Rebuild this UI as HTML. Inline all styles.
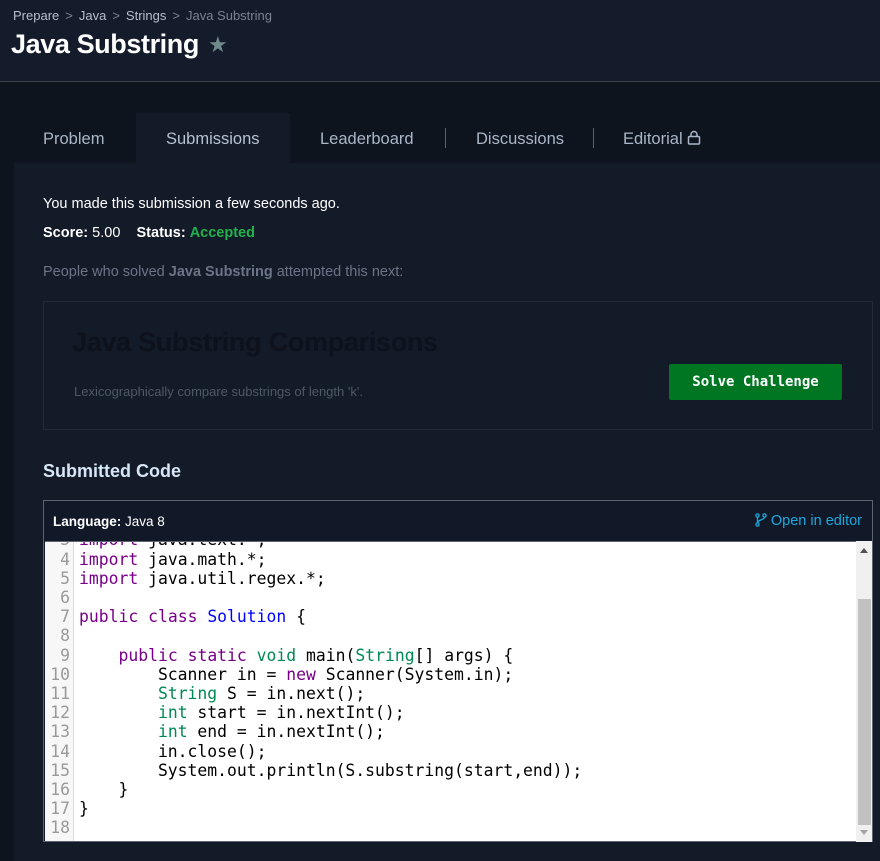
<!DOCTYPE html>
<html><head><meta charset="utf-8"><style>
*{margin:0;padding:0;box-sizing:border-box}
body{width:880px;height:861px;overflow:hidden;background:#0e141e;font-family:"Liberation Sans",sans-serif;position:relative;color:#fff}
.hdr{position:absolute;left:0;top:0;width:880px;height:82px;background:#141b2b;border-bottom:1px solid #3a3f4a}
.crumb{position:absolute;left:13px;top:8px;font-size:13px;color:#b7bfcc}
.crumb span.s{color:#7a8290;margin:0 6px}
.crumb .last{color:#7a8290}
h1{position:absolute;left:11px;top:29px;font-size:27px;font-weight:bold;color:#fff;letter-spacing:-0.4px}
.star{position:absolute;left:208px;top:32px;color:#6e8a8d;font-size:22px}
.tab{position:absolute;top:130px;font-size:16.5px;color:#a9b6c8}
.act{position:absolute;left:136px;top:113px;width:154px;height:51px;background:#131a28}
.sep{position:absolute;top:128px;width:1px;height:20px;background:#5a6270}
.panel{position:absolute;left:14px;top:163px;width:866px;height:698px;background:#131a28}
.t{position:absolute;font-size:14.5px}
.card{position:absolute;left:43px;top:301px;width:830px;height:129px;border:1px solid #232a38}
.btn{position:absolute;left:669px;top:364px;width:173px;height:36px;background:#007623;border-radius:2px;color:#fff;font-family:"DejaVu Sans Mono",monospace;font-weight:bold;font-size:14px;text-align:center;line-height:37px}
.code{position:absolute;left:43px;top:500px;width:830px;height:342px;border:1px solid #5e6470;background:#111827}
.cb{position:absolute;left:1px;top:40px;width:811px;height:300px;background:#fff;overflow:hidden;border-top:1px solid #5e6470}
.gut{position:absolute;left:0;top:0;width:29px;height:300px;background:#f7f7f7;border-right:1px solid #ddd}
pre{position:absolute;left:0;top:-50px;font-family:"DejaVu Sans Mono",monospace;font-size:16.4px;line-height:19.2px;color:#000}
.n{display:inline-block;width:25px;text-align:right;color:#999;margin-right:9px}
.k{color:#708}.v{color:#085}.d{color:#00f}
.sb{position:absolute;left:812px;top:40px;width:16px;height:301px;background:#f0f0f0}
</style></head><body>
<div class="hdr">
<div class="crumb">Prepare<span class="s">&gt;</span>Java<span class="s">&gt;</span>Strings<span class="s">&gt;</span><span class="last">Java Substring</span></div>
<h1>Java Substring</h1><div class="star">★</div>
</div>
<div class="act"></div>
<div class="panel"></div>
<div class="tab" style="left:43px">Problem</div>
<div class="tab" style="left:166px;color:#b6c2d2">Submissions</div>
<div class="tab" style="left:320px">Leaderboard</div>
<div class="sep" style="left:445px"></div>
<div class="tab" style="left:476px">Discussions</div>
<div class="sep" style="left:593px"></div>
<div class="tab" style="left:623px">Editorial <svg width="14" height="15" viewBox="0 0 14 15" style="vertical-align:-1px"><rect x="1.5" y="6.5" width="11" height="7.5" rx="1" fill="none" stroke="#a9b6c8" stroke-width="1.5"/><path d="M4 6.5V4.5a3 3 0 0 1 6 0v2" fill="none" stroke="#a9b6c8" stroke-width="1.5"/></svg></div>

<div class="t" style="left:43px;top:196px">You made this submission a few seconds ago.</div>
<div class="t" style="left:43px;top:225px"><b>Score:</b> 5.00 &nbsp;&nbsp; <b>Status:</b> <b style="color:#22b24c">Accepted</b></div>
<div class="t" style="left:43px;top:264px;color:#6b7585">People who solved <b>Java Substring</b> attempted this next:</div>
<div class="card"></div>
<div style="position:absolute;left:72px;top:327px;font-size:27px;font-weight:bold;color:#0d121c;letter-spacing:-0.3px">Java Substring Comparisons</div>
<div class="t" style="left:74px;top:384px;font-size:13px;color:#4e5968">Lexicographically compare substrings of length 'k'.</div>
<div class="btn">Solve Challenge</div>
<div style="position:absolute;left:43px;top:461px;font-size:18px;font-weight:bold;color:#d7e6f5">Submitted Code</div>
<div class="code">
<div style="position:absolute;left:9px;top:13px;font-size:13.5px"><b>Language:</b> Java 8</div>
<div style="position:absolute;right:10px;top:12px;font-size:14.5px;color:#1ba9e0"><svg width="12" height="14" viewBox="0 0 12 14" style="vertical-align:-2px"><g fill="none" stroke="#1ba9e0" stroke-width="1.3"><circle cx="2.5" cy="2.5" r="1.6"/><circle cx="2.5" cy="11.5" r="1.6"/><circle cx="9.5" cy="2.5" r="1.6"/><path d="M2.5 4.1v5.8M9.5 4.1c0 3-7 2.5-7 5.8"/></g></svg> Open in editor</div>
<div class="cb"><div class="gut"></div>
<pre><span class="n">1</span><span class="k">import</span> java.io.*;
<span class="n">2</span><span class="k">import</span> java.util.*;
<span class="n">3</span><span class="k">import</span> java.text.*;
<span class="n">4</span><span class="k">import</span> java.math.*;
<span class="n">5</span><span class="k">import</span> java.util.regex.*;
<span class="n">6</span>
<span class="n">7</span><span class="k">public</span> <span class="k">class</span> <span class="d">Solution</span> {
<span class="n">8</span>
<span class="n">9</span>    <span class="k">public</span> <span class="k">static</span> <span class="v">void</span> main(<span class="v">String</span>[] args) {
<span class="n">10</span>        Scanner in = <span class="k">new</span> Scanner(System.in);
<span class="n">11</span>        <span class="v">String</span> S = in.next();
<span class="n">12</span>        <span class="v">int</span> start = in.nextInt();
<span class="n">13</span>        <span class="v">int</span> end = in.nextInt();
<span class="n">14</span>        in.close();
<span class="n">15</span>        System.out.println(S.substring(start,end));
<span class="n">16</span>    }
<span class="n">17</span>}
<span class="n">18</span></pre></div>
<div class="sb">
<div style="position:absolute;left:4px;top:7px;width:0;height:0;border-left:4px solid transparent;border-right:4px solid transparent;border-bottom:5px solid #505050"></div>
<div style="position:absolute;left:2px;top:58px;width:13px;height:226px;background:#c1c1c1"></div>
<div style="position:absolute;left:4px;top:289px;width:0;height:0;border-left:4px solid transparent;border-right:4px solid transparent;border-top:5px solid #a3a3a3"></div>
</div>
</div>
</body></html>
